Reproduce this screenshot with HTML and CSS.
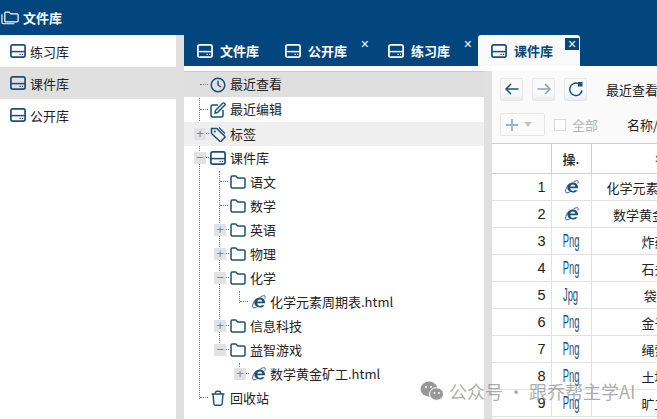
FILE: index.html
```html
<!DOCTYPE html>
<html lang="zh">
<head>
<meta charset="utf-8">
<title>文件库</title>
<link rel="stylesheet" href="styles.css">
</head>
<body>
<svg class="defs" width="0" height="0">
  <symbol id="drive" viewBox="0 0 16 16"><rect x="0.9" y="1.9" width="14.2" height="12.2" rx="1.8" fill="none" stroke="currentColor" stroke-width="1.7"/><path d="M1 8.600h14" stroke="currentColor" stroke-width="1.500"/><path d="M9.500 11.400h1.200M12 11.400h1.200" stroke="currentColor" stroke-width="1.200"/></symbol>
  <symbol id="folder" viewBox="0 0 16 16"><path d="M1 3.200c0-.7.500-1.200 1.200-1.200h3.600l2 2h6c.7 0 1.200.5 1.200 1.200v7.600c0 .7-.5 1.200-1.200 1.200H2.200c-.7 0-1.200-.5-1.200-1.200z" fill="none" stroke="currentColor" stroke-width="1.500"/></symbol>
  <symbol id="ie" viewBox="0 0 16 16"><path d="M4.500 9.300h10.500c.3-3.400-1.800-5.800-4.900-5.800-3.300 0-5.800 2.200-5.800 5.100 0 3 2.400 4.900 5.600 4.900 2 0 3.700-.8 4.700-2.300h-2.800c-.5.500-1.100.7-1.800.7-1.500 0-2.500-.9-2.700-2.600zM7.200 7.500c.3-1.200 1.400-2 2.700-2 1.300 0 2.200.8 2.500 2z" fill="currentColor" fill-rule="evenodd"/><path d="M6 5.200C3.800 7.300 2.600 10 2.500 12.300c0 1.900 2.200 1.800 4 .9M10.500 2.800c2-1.100 4.300-1.600 4.700-.5.200.7 0 1.500-.5 2.300" fill="none" stroke="currentColor" stroke-width=".9"/></symbol>
</svg>

<header class="top"><svg class="top-icon" viewBox="0 0 20 16"><path d="M1 4v8.500c0 1 .6 1.500 1.500 1.500H14" fill="none" stroke="#fff" stroke-width="1.200"/><path d="M4 3c0-.7.500-1.200 1.200-1.200h3.300l1.800 1.900h6.500c.7 0 1.200.5 1.200 1.200v6c0 .7-.5 1.200-1.200 1.200H5.200c-.7 0-1.200-.5-1.200-1.200z" fill="none" stroke="#fff" stroke-width="1.300"/></svg><span>文件库</span></header>

<div class="main">
  <nav class="side">
    <div class="side-row"><svg class="ico"><use href="#drive"/></svg>练习库</div>
    <div class="side-row on"><svg class="ico"><use href="#drive"/></svg>课件库</div>
    <div class="side-row"><svg class="ico"><use href="#drive"/></svg>公开库</div>
  </nav>
  <div class="gutter"></div>
  <div class="work">
    <div class="tabs">
      <div class="tab tab-a"><svg class="ico"><use href="#drive"/></svg>文件库</div>
      <div class="tab tab-b"><svg class="ico"><use href="#drive"/></svg>公开库<i class="x">×</i></div>
      <div class="tab tab-c"><svg class="ico"><use href="#drive"/></svg>练习库<i class="x">×</i></div>
      <div class="tab active"><svg class="ico"><use href="#drive"/></svg>课件库<i class="x">×</i></div>
    </div>
    <div class="panes">
      <div class="tree">
        <div class="vline v0"></div><div class="vline v1"></div><div class="vline v2"></div><div class="vline v3"></div>
        <div class="node tall l0 hi"><span class="sw"></span><svg class="ico" viewBox="0 0 16 16"><circle cx="8" cy="8" r="6.800" fill="none" stroke="currentColor" stroke-width="1.500"/><path d="M8 3.800V8l3 2" fill="none" stroke="currentColor" stroke-width="1.400"/></svg>最近查看</div>
        <div class="node tall l0"><span class="sw"></span><svg class="ico" viewBox="0 0 16 16"><path d="M8 3H2.500C1.700 3 1 3.700 1 4.500v9c0 .8.700 1.500 1.500 1.500h9c.8 0 1.500-.7 1.500-1.500V8" fill="none" stroke="currentColor" stroke-width="1.500"/><path d="M5.500 8.500 12.700 1.300c.5-.5 1.200-.5 1.700 0l.3.3c.5.500.5 1.200 0 1.700L7.500 10.500l-2.500.5z" fill="none" stroke="currentColor" stroke-width="1.400"/></svg>最近编辑</div>
        <div class="node l0 soft"><span class="sw box">+</span><svg class="ico" viewBox="0 0 16 16"><path d="M1.500 2.500h5.300l7.700 7.500a1.300 1.300 0 0 1 0 1.800L11.300 15a1.300 1.300 0 0 1-1.800 0L1.500 7.500z" fill="none" stroke="currentColor" stroke-width="1.500"/><path d="M9 1.500l6 6" stroke="currentColor" stroke-width="1.100"/><circle cx="4.800" cy="5.600" r="1" fill="currentColor"/></svg>标签</div>
        <div class="node l0"><span class="sw box">−</span><svg class="ico"><use href="#drive"/></svg>课件库</div>
        <div class="node l1"><span class="sw"></span><svg class="ico"><use href="#folder"/></svg>语文</div>
        <div class="node l1"><span class="sw"></span><svg class="ico"><use href="#folder"/></svg>数学</div>
        <div class="node l1"><span class="sw box">+</span><svg class="ico"><use href="#folder"/></svg>英语</div>
        <div class="node l1"><span class="sw box">+</span><svg class="ico"><use href="#folder"/></svg>物理</div>
        <div class="node l1"><span class="sw box">−</span><svg class="ico"><use href="#folder"/></svg>化学</div>
        <div class="node l2"><span class="sw"></span><svg class="ico"><use href="#ie"/></svg>化学元素周期表.html</div>
        <div class="node l1"><span class="sw box">+</span><svg class="ico"><use href="#folder"/></svg>信息科技</div>
        <div class="node l1"><span class="sw box">−</span><svg class="ico"><use href="#folder"/></svg>益智游戏</div>
        <div class="node l2"><span class="sw box">+</span><svg class="ico"><use href="#ie"/></svg>数学黄金矿工.html</div>
        <div class="node l0"><span class="sw"></span><svg class="ico" viewBox="0 0 16 16"><path d="M1.500 4h13M5.500 4V2.600c0-.8.500-1.300 1.300-1.300h2.400c.8 0 1.300.5 1.300 1.300V4M3 4l.9 10c.1.700.5 1.200 1.300 1.200h5.600c.8 0 1.200-.5 1.300-1.200L13 4" fill="none" stroke="currentColor" stroke-width="1.400"/></svg>回收站</div>
      </div>
      <div class="gutter"></div>
      <div class="files">
        <div class="bar bar-nav">
          <button class="btn"><svg viewBox="0 0 16 16"><path d="M14.500 8H2M7 3 2 8l5 5" fill="none" stroke="currentColor" stroke-width="1.500"/></svg></button>
          <button class="btn dim"><svg viewBox="0 0 16 16"><path d="M1.500 8H14M9 3l5 5-5 5" fill="none" stroke="currentColor" stroke-width="1.500"/></svg></button>
          <button class="btn"><svg viewBox="0 0 16 16"><path d="M14 9.500A6.200 6.200 0 1 1 10 2.500" fill="none" stroke="currentColor" stroke-width="1.500"/><path d="M10 1h4.500v4.500H10z" fill="currentColor"/></svg></button>
          <span class="crumb">最近查看</span>
        </div>
        <div class="bar bar-act">
          <button class="btn add"><svg viewBox="0 0 14 14"><path d="M7 1v12M1 7h12" stroke="currentColor" stroke-width="1.800"/></svg><b class="caret"></b></button>
          <span class="check"></span><span class="all">全部</span>
          <span class="search">名称/关键字</span>
        </div>
        <table class="grid">
          <colgroup><col class="c-n"><col class="c-op"><col class="c-name"><col class="c-more"></colgroup>
          <thead><tr><th></th><th>操.</th><th>名称</th><th></th></tr></thead>
          <tbody>
            <tr><td class="n">1</td><td class="op"><svg class="ie"><use href="#ie"/></svg></td><td>化学元素周期表.html</td><td></td></tr>
            <tr><td class="n">2</td><td class="op"><svg class="ie"><use href="#ie"/></svg></td><td>数学黄金矿工.html</td><td></td></tr>
            <tr><td class="n">3</td><td class="op"><span class="ext">Png</span></td><td>炸药.png</td><td></td></tr>
            <tr><td class="n">4</td><td class="op"><span class="ext">Png</span></td><td>石头.png</td><td></td></tr>
            <tr><td class="n">5</td><td class="op"><span class="ext">Jpg</span></td><td>袋子.jpg</td><td></td></tr>
            <tr><td class="n">6</td><td class="op"><span class="ext">Png</span></td><td>金子.png</td><td></td></tr>
            <tr><td class="n">7</td><td class="op"><span class="ext">Png</span></td><td>绳索.png</td><td></td></tr>
            <tr><td class="n">8</td><td class="op"><span class="ext">Png</span></td><td>土地.png</td><td></td></tr>
            <tr><td class="n">9</td><td class="op"><span class="ext">Png</span></td><td>旷工.png</td><td></td></tr>
          </tbody>
        </table>
      </div>
    </div>
  </div>
</div>

<div class="mark">
  <svg class="mark-icon" viewBox="0 0 24 20"><ellipse cx="9" cy="8" rx="8.500" ry="7.500" fill="#8d8d8d"/><ellipse cx="16.500" cy="13" rx="7" ry="6.300" fill="#8d8d8d" stroke="#fff" stroke-width="1"/><circle cx="6" cy="6" r="1.100" fill="#fff"/><circle cx="11" cy="6" r="1.100" fill="#fff"/><circle cx="14.500" cy="12" r=".9" fill="#fff"/><circle cx="19" cy="12" r=".9" fill="#fff"/></svg>
  <span>公众号 · 跟乔帮主学AI</span>
</div>
</body>
</html>
```

FILE: styles.css
```css
* { box-sizing: border-box; }
html, body { margin: 0; height: 100%; }
body {
  position: relative;
  width: 657px;
  height: 419px;
  overflow: hidden;
  background: #fff;
  color: #222;
  font: 13px/1 "Noto Sans CJK SC", "Liberation Sans", sans-serif;
  display: flex;
  flex-direction: column;
}
.defs { position: absolute; }
.ico { width: 16px; height: 16px; color: #1a4f78; flex: none; }

.top {
  height: 35px;
  flex: none;
  background: #03467d;
  color: #fff;
  font-weight: 700;
  display: flex;
  align-items: center;
  padding-left: 1px;
  gap: 3px;
}
.top-icon { width: 19px; height: 16px; }

.main { flex: 1; display: flex; min-height: 0; }
.side { width: 176px; flex: none; background: #fff; }
.side-row {
  height: 32px;
  display: flex;
  align-items: center;
  gap: 4px;
  padding-left: 10px;
}
.side-row.on { background: #e0e0e0; }
.gutter { width: 8px; flex: none; background: #e0e0e0; }
.work { flex: 1; display: flex; flex-direction: column; min-width: 0; }

.tabs {
  height: 31px;
  flex: none;
  background: #03467d;
  display: flex;
  color: #fff;
  font-weight: 700;
}
.tab {
  position: relative;
  display: flex;
  align-items: center;
  gap: 7px;
  padding-left: 13px;
  height: 31px;
}
.tab .ico { color: #fff; }
.tab-a { width: 88px; }
.tab-b { width: 103px; }
.tab-c { width: 103px; }
.tab.active {
  width: 102px;
  color: #03467d;
  background: #f9f9f9;
  border-radius: 3px 3px 0 0;
}
.tab.active .ico { color: #1a4f78; }
.x {
  position: absolute;
  right: 6px;
  top: 2px;
  font: 400 14px/14px "Liberation Sans", sans-serif;
  color: #fff;
}
.active .x {
  right: 1px;
  top: 3px;
  width: 14px;
  height: 12px;
  line-height: 12px;
  text-align: center;
  background: #03467d;
}

.panes {
  flex: 1;
  display: flex;
  min-height: 0;
  padding-top: 5px;
}
.tree {
  position: relative;
  width: 300px;
  flex: none;
  border-top: 1px solid #cfcac6;
}
.node {
  position: relative;
  height: 24px;
  display: flex;
  align-items: center;
  gap: 4px;
  padding-bottom: 2px;
}
.node .ico { margin-top: 2px; }
.node.tall { height: 25px; }
.l0 { padding-left: 10px; }
.l1 { padding-left: 30px; }
.l2 { padding-left: 50px; }
.hi { background: #dfdfdf; }
.soft { background: #efefef; }
.sw {
  position: relative;
  width: 12px;
  height: 12px;
  flex: none;
  margin-top: 2px;
  font: 400 13px/11px "Liberation Sans", sans-serif;
  color: #888;
  text-align: center;
}
.sw::after {
  content: "";
  position: absolute;
  left: 6px;
  top: 5px;
  width: 8px;
  border-top: 1px dotted #777;
}
.sw.box { background: #e2e2e2; }
.sw.box::after { left: 12px; width: 3px; }
.vline { position: absolute; border-left: 1px dotted #777; }
.v0 { left: 15px; top: 0; height: 327px; }
.v1 { left: 35px; top: 99px; height: 180px; }
.v2 { left: 55px; top: 219px; height: 12px; }
.v3 { left: 55px; top: 291px; height: 12px; }

.files {
  flex: 1;
  min-width: 0;
  overflow: hidden;
  background: #fafafa;
}
.bar { display: flex; align-items: center; }
.bar-nav { height: 35px; padding-left: 8px; gap: 9px; padding-top: 1px; }
.bar-act { height: 37px; padding-left: 8px; }
.btn {
  width: 23px;
  height: 23px;
  padding: 3px;
  flex: none;
  background: linear-gradient(#fafafa 70%, #e8edf1);
  border: 1px solid #e6e6e6;
  border-radius: 2px;
  color: #1a5280;
  display: flex;
  align-items: center;
  justify-content: center;
}
.btn svg { width: 16px; height: 16px; flex: none; }
.btn.dim { color: #8aa5bb; }
.add {
  width: 45px;
  gap: 5px;
  color: #9fb4c5;
  background: #fafafa;
  justify-content: flex-start;
  padding-left: 4px;
}
.add svg { width: 14px; height: 14px; }
.caret {
  width: 0;
  height: 0;
  border: 4px solid transparent;
  border-top: 5px solid #c4c4c4;
  border-bottom: 0;
}
.crumb { margin-left: 10px; white-space: nowrap; }
.check {
  width: 12px;
  height: 12px;
  flex: none;
  margin-left: 9px;
  border: 1px solid #ddd;
  background: #fff;
}
.all { margin-left: 6px; color: #b5b5b5; white-space: nowrap; flex: none; }
.search { margin-left: 29px; white-space: nowrap; flex: none; }

.grid {
  table-layout: fixed;
  width: 373px;
  border-collapse: collapse;
  background: #fff;
}
.c-n { width: 59px; }
.c-op { width: 40px; }
.c-name { width: 154px; }
.c-more { width: 120px; }
.grid th, .grid td {
  padding: 0;
  text-align: center;
  white-space: nowrap;
  overflow: hidden;
  font-weight: 400;
}
.grid th {
  height: 30px;
  font-weight: 500;
  border: 1px solid #cfcfcf;
  border-left-width: 0;
  background: #fff;
}
.grid td {
  height: 27px;
  border-right: 1px solid #e2e2e2;
  border-bottom: 1px solid #e2e2e2;
}
.grid td.n { text-align: right; padding-right: 5px; font: 14.500px "Liberation Sans", sans-serif; }
.ie { width: 16px; height: 16px; color: #1a5280; vertical-align: middle; }
.ext {
  display: inline-block;
  font: 18px/1 "Liberation Sans", sans-serif;
  color: #1a5280;
  transform: scaleX(.52);
}

.mark {
  position: absolute;
  left: 420px;
  top: 381px;
  display: flex;
  align-items: center;
  gap: 5px;
  color: rgba(140, 140, 140, .72);
  font: 18px/1 "Noto Sans CJK SC", "Liberation Sans", sans-serif;
  white-space: nowrap;
}
.mark-icon { width: 24px; height: 20px; opacity: .9; }
```
